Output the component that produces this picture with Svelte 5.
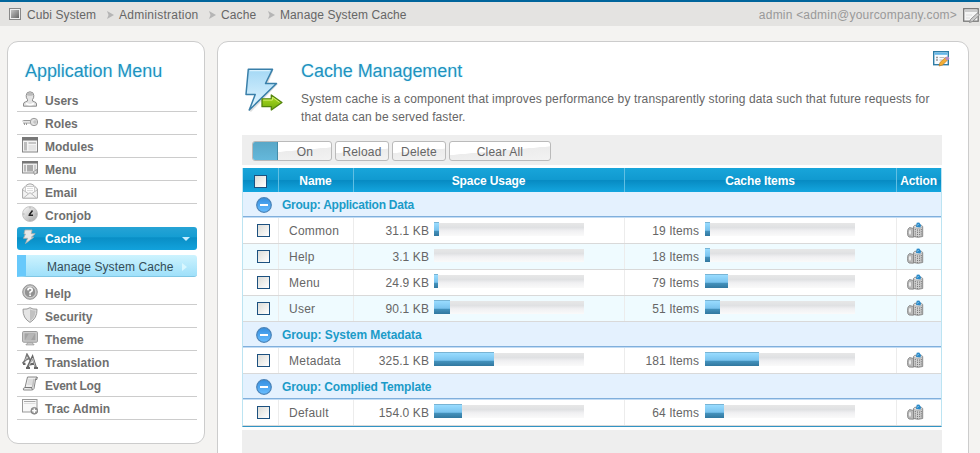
<script>
  const crumbs = ['Cubi System', 'Administration', 'Cache', 'Manage System Cache'];
  const top = ['Users', 'Roles', 'Modules', 'Menu', 'Email', 'Cronjob'];
  const bottom = ['Help', 'Security', 'Theme', 'Translation', 'Event Log', 'Trac Admin'];
  const groups = [
    {
      name: 'Application Data',
      rows: [
        { name: 'Common', size: '31.1 KB', used: 5, items: 19, bar: 5 },
        { name: 'Help', size: '3.1 KB', used: 0, items: 18, bar: 5 },
        { name: 'Menu', size: '24.9 KB', used: 4, items: 79, bar: 23 },
        { name: 'User', size: '90.1 KB', used: 16, items: 51, bar: 15 },
      ],
    },
    { name: 'System Metadata', rows: [{ name: 'Metadata', size: '325.1 KB', used: 60, items: 181, bar: 54 }] },
    { name: 'Complied Template', rows: [{ name: 'Default', size: '154.0 KB', used: 28, items: 64, bar: 19 }] },
  ];
</script>

{#snippet icon(name)}
  <svg class="ico" width="16" height="16" viewBox="0 0 16 16">
    {#if name === 'Users'}
      <path d="M1.500 15.200V13q0-1.600 2-2.200l2-.8V8.600Q4 7 4.200 4.500 4.400.8 8 .8t3.800 3.700Q12 7 10.500 8.600V10l2 .8q2 .6 2 2.200v2.200z" fill="#e3e3e3" stroke="#8b8b8b" />
      <path d="M5 4.200q3 1.200 6 0V3Q9.500 1.300 8 1.300T5 3z" fill="#bbb" /><path d="M4 12.500q4 2.500 8 0" stroke="#fff" stroke-width="1.500" fill="none" />
    {:else if name === 'Roles'}
      <path d="M.5 7L1.500 6.500H9.500M1 9h8.500M2.500 9v2M4.500 9v2" stroke="#999" fill="none" />
      <path d="M1 7.800h9" stroke="#ddd" />
      <circle cx="12" cy="8" r="3.700" fill="#e2e2e2" stroke="#9b9b9b" /><circle cx="13" cy="8" r="1.100" fill="#fff" stroke="#999" stroke-width=".7" />
    {:else if name === 'Modules'}
      <rect x=".5" y=".5" width="15" height="14.500" fill="#f4f4f4" stroke="#858585" /><rect width="16" height="3.500" fill="#777" />
      <rect x="2" y="5" width="3" height="8.500" fill="#bdbdbd" /><rect x="6.500" y="5" width="7.500" height="2" fill="#c6c6c6" /><rect x="6.500" y="8" width="7.500" height="5.500" fill="#e4e4e4" />
    {:else if name === 'Menu'}
      <rect x=".5" y="1.500" width="15" height="11.500" fill="#eee" stroke="#8b8b8b" /><rect y="1" width="16" height="2.500" fill="#777" />
      <rect x="2" y="5" width="2" height="6.500" fill="#b8b8b8" /><rect x="5" y="5" width="6" height="6.500" fill="#aaa" /><rect x="12" y="5" width="2" height="5" fill="#ccc" />
      <path d="M11.500 11.500l3.500-2v3.500l-2.500 1.500z" fill="#ddd" stroke="#888" stroke-width=".8" />
    {:else if name === 'Email'}
      <path d="M.6 6L4 2.500Q8-.8 12 2.500L15.400 6v9.200H.6z" fill="#f3f3f3" stroke="#a5a5a5" />
      <path d="M3.500 8.500V3.500h9v5" fill="#fff" stroke="#ccc" /><path d="M5 5.500h6M5 7.500h6" stroke="#ddd" /><path d="M1 7l5.500 3.800L1.500 15M15 7l-5.500 3.800 5 4.200M6.500 10.800L8 9.700l1.500 1.100" fill="none" stroke="#bbb" />
    {:else if name === 'Cronjob'}
      <circle cx="8" cy="8" r="7.500" fill="url(#metal)" stroke="#bbb" stroke-width=".8" /><path d="M10.500 4.500L7.500 8.500M6.500 9.300H11" stroke="#222" stroke-width="1.500" /><path d="M8 1v1.500M8 13.500V15M1 8h1.500M13.500 8H15" stroke="#aaa" />
    {:else if name === 'Cache'}
      <path d="M3 2h7L9.200 5.700h4L9.300 9.200h2.400L3.500 15.500 5.700 10.300H1.500L3.500 6H2z" fill="#e8e8e8" stroke="#b7b0aa" stroke-width=".8" />
    {:else if name === 'Help'}
      <circle cx="8" cy="8" r="7.300" fill="#bbb" stroke="#959595" /><circle cx="8" cy="8" r="5.700" fill="#929292" stroke="#d8d8d8" stroke-width=".8" />
      <path d="M5.900 6.400Q6 4.200 8.100 4.200T10.200 6.200Q10.200 7.300 8.100 8.300V9.400M8.100 10.500v1.600" fill="none" stroke="#fff" stroke-width="1.700" />
    {:else if name === 'Security'}
      <path d="M8 .7Q10.500 2.500 15 2.200 15.300 11.200 8 15.400.7 11.200 1 2.200 5.500 2.500 8 .7z" fill="#e5e5e5" stroke="#999" />
      <path d="M8 2.200Q10.500 3.600 13.700 3.400 13.500 10.500 8 14z" fill="#c2c2c2" />
    {:else if name === 'Theme'}
      <rect x=".6" y="1.500" width="14.800" height="10.700" rx="1" fill="#ccc" stroke="#999" /><rect x="2.500" y="3.300" width="11" height="7" fill="#a3a3a3" /><path d="M3 10l4-6.500h6L9 10z" fill="#b6b6b6" /><path d="M5.500 12.500h5v1.500h1.500v1H4v-1h1.500z" fill="#c9c9c9" stroke="#999" stroke-width=".6" />
    {:else if name === 'Translation'}
      <path d="M.5 10.500L3 7.500 5 1.500 8.500 7.500M2.500 7.500L7 5.500" fill="none" stroke="#777" stroke-width="1.800" />
      <path d="M5.500 14.500L10.500 4l3.500 11M7.500 11.500l6-1.200M1 11l2.500-.2M4 15h4M12 15h4" fill="none" stroke="#666" stroke-width="2.200" /><path d="M7 13l3.700-8 2.500 8.500M3.500 7L5 3.500" fill="none" stroke="#ccc" stroke-width=".9" />
    {:else if name === 'Event Log'}
      <path d="M5.500 1H15q-1.200 1-1.500 3L12 12.500Q11.500 14 9.500 14H1.500Q.5 12 3 11.500z" fill="#efefef" stroke="#888" /><path d="M3 11.500h7q-.5 2 .5 2.500M13.300 3.500h1.500L15.300 1" fill="#ddd" stroke="#777" /><path d="M12 3l-1.500 8" stroke="#bbb" stroke-width="1.500" /><path d="M6 4h6M5.700 6h6M5.300 8h6" stroke="#ccc" />
    {:else if name === 'Trac Admin'}
      <rect x=".5" y=".5" width="14.500" height="12.500" fill="#f8f8f8" stroke="#999" /><path d="M2 2.500h11.500" stroke="#aaa" /><path d="M2 4.500h11.500" stroke="#ddd" />
      <circle cx="12.300" cy="11.800" r="3.400" fill="#999" stroke="#777" stroke-width=".7" /><path d="M12.300 9.600V14M10.100 11.800h4.400" stroke="#fff" stroke-width="1.400" />
    {/if}
  </svg>
{/snippet}

{#snippet menuItem(name)}
  <a class="item" class:last={name === 'Cronjob'}>{@render icon(name)}<span class:wide={name === 'Event Log'}>{name}</span></a>
{/snippet}

<svg class="defs" width="0" height="0">
  <defs>
    <linearGradient id="metal" x1="0" y1="0" x2="1" y2="1"><stop offset="0" stop-color="#fafafa" /><stop offset="1" stop-color="#a5a5a5" /></linearGradient>
    <linearGradient id="dark" x1="0" y1="0" x2="1" y2="1"><stop offset="0" stop-color="#c4c4c4" /><stop offset="1" stop-color="#666" /></linearGradient>
    <linearGradient id="sky" x1="0" y1="0" x2="0" y2="1"><stop offset="0" stop-color="#a4d8f5" /><stop offset="1" stop-color="#e3f6ff" /></linearGradient>
    <linearGradient id="leaf" x1="0" y1="0" x2="0" y2="1"><stop offset="0" stop-color="#b0df22" /><stop offset="1" stop-color="#72ac0c" /></linearGradient>
    <linearGradient id="orb" x1="0" y1="0" x2="0" y2="1"><stop offset="0" stop-color="#348ee0" /><stop offset="1" stop-color="#68bdff" /></linearGradient>
  </defs>
</svg>

<div class="page">
  <header>
    <svg class="home" width="12" height="12" viewBox="0 0 12 12"><rect x=".5" y=".5" width="11" height="11" fill="#eee" stroke="#888" /><rect x="2" y="2" width="8" height="8" fill="url(#dark)" /></svg>
    <nav>
      {#each crumbs as c, i}
        {#if i}<svg class="sep" width="7" height="8" viewBox="0 0 7 8"><path d="M0 0L7 4 0 8 1.500 4z" fill="#b5b5b5" /></svg>{/if}
        <span class="c{i}">{c}</span>
      {/each}
    </nav>
    <span class="user">admin &lt;admin@yourcompany.com&gt;</span>
    <svg class="note" width="17" height="17" viewBox="0 0 17 17"><rect x=".7" y="1.700" width="14.500" height="12.500" fill="#f5f5f5" stroke="#777" stroke-width="1.300" /><path d="M2 4h12" stroke="#ccc" stroke-width="2" /><path d="M3 8h6M3 11h4" stroke="#ddd" /><path d="M6.500 15.500l1-3 7-6.500 2 2-7 6.500z" fill="#ccc" stroke="#888" stroke-width=".9" /></svg>
  </header>

  <div class="body">
    <aside>
      <h2>Application Menu</h2>
      {#each top as n}{@render menuItem(n)}{/each}
      <a class="active">{@render icon('Cache')}<span>Cache</span><i></i></a>
      <a class="sub"><span>Manage System Cache</span><i></i></a>
      {#each bottom as n}{@render menuItem(n)}{/each}
    </aside>

    <main>
      <div class="intro">
        <svg class="bolt" width="40" height="48" viewBox="0 0 40 48">
          <path d="M5 5h24l-5 13h10L7 46 4 44l8-15H3z" fill="#000" opacity=".12" />
          <path d="M4.300 3.300H28.500L21.500 17.500H32.500L5.300 44 11.200 28.500H2z" fill="url(#sky)" stroke="#397fa9" stroke-width="1.500" stroke-linejoin="round" />
          <path d="M5.800 4.700h20" stroke="#e6f7ff" />
          <path d="M18 32.800H27.300V29L38 36.500 27.300 44V40.700H18z" fill="url(#leaf)" stroke="#53840d" stroke-width="1.300" stroke-linejoin="round" /><path d="M19.200 34.100H28.400V31.200L35.500 36.300" fill="none" stroke="#d5ee71" />
        </svg>
        <div class="copy">
          <h1>Cache Management</h1>
          <p><span class="l1">System cache is a component that improves performance by transparently storing data such that future requests for</span><br /><span class="l2">that data can be served faster.</span></p>
        </div>
        <svg class="edit" width="17" height="16" viewBox="0 0 17 16"><rect x=".7" y=".7" width="14.600" height="13" fill="#f7fbff" stroke="#2e7ca5" stroke-width="1.400" /><rect x="1.500" y="1.500" width="13" height="2.300" fill="#63b5e6" /><path d="M3 6.500h2M3 9h2" stroke="#999" stroke-width="1.500" /><path d="M6.500 6.500h5M6.500 9h3" stroke="#bbb" /><path d="M6 15l1-3.500 5.500-5 2.300 2.300L9.500 14z" fill="#f2ae35" stroke="#bb7920" stroke-width=".7" /><circle cx="14.300" cy="7.300" r="1.900" fill="#b98cc4" /></svg>
      </div>

      <div class="tools">
        <button class="on"><b></b><span>On</span></button>
        <button class="mid">Reload</button>
        <button class="mid">Delete</button>
        <button class="clear">Clear All</button>
      </div>

      <div class="table">
        <div class="tr head">
          <div class="c-check"><span class="box"></span></div>
          <div class="c-name">Name</div>
          <div class="c-space">Space Usage</div>
          <div class="c-items">Cache Items</div>
          <div class="c-act">Action</div>
        </div>
        {#each groups as g, gi}
          <div class="group">
            <svg width="16" height="16" viewBox="0 0 16 16"><circle cx="8" cy="8" r="7.300" fill="url(#orb)" stroke="#4a83b8" stroke-width="1.200" /><path d="M4 8h8" stroke="#fff" stroke-width="2" /></svg>
            <span class="g{gi}">Group: {g.name}</span>
          </div>
          {#each g.rows as r, i}
            <div class="tr row" class:alt={i % 2}>
              <div class="c-check"><span class="box"></span></div>
              <div class="c-name">{r.name}</div>
              <div class="c-space"><span class="val">{r.size}</span><span class="track"><span class="fill" style="width:{r.used}px"></span></span></div>
              <div class="c-items"><span class="val">{r.items} Items</span><span class="track"><span class="fill" style="width:{r.bar}px"></span></span></div>
              <div class="c-act">
                <svg width="17" height="17" viewBox="0 0 17 17">
                  <path d="M6.500 4.500Q6.500 3 11 3t4.700 1.500V14.500q-4.700 1.500-9.200 0z" fill="#d0d0d0" stroke="#8a8a8a" />
                  <path d="M8.300 7v7.500M10.500 7.500v7.500M12.600 7.500v7M14.300 7v7" stroke="#777" stroke-width="1" stroke-dasharray="1.200 1" />
                  <ellipse cx="11" cy="4.800" rx="4.300" ry="1.500" fill="#e6e6e6" stroke="#888" stroke-width=".5" />
                  <path d="M9 5l.7-4.300 2.500-.2L14 3l-.5 2.500z" fill="#2c8ac8" /><path d="M10.500 3.500l1-1.500" stroke="#8fd0f5" />
                  <path d="M2.500 5.500L6.500 6.500v8.700L2 15Q.5 14.500.5 10.500T2.500 5.500z" fill="#b9b9b9" stroke="#858585" stroke-width=".9" /><ellipse cx="3" cy="10.300" rx="1.500" ry="3" fill="#eee" stroke="#999" stroke-width=".6" />
                </svg>
              </div>
            </div>
          {/each}
        {/each}
      </div>
      <div class="foot"></div>
    </main>
  </div>
</div>

<style>
  :global(body) { margin: 0; overflow: hidden; }
  .page { width: 980px; height: 453px; overflow: hidden; background: #f4f3f1; font: 12px/16px "Liberation Sans", Arial, sans-serif; color: #666; letter-spacing: .1px; }
  .page * { box-sizing: border-box; }
  .defs { display: block; }
  svg { flex: none; }
  header { height: 26px; border-top: 2px solid #00659c; background: #e4e3e1; display: flex; align-items: center; padding: 0 0 0 9px; }
  .home { margin-right: 6px; }
  nav { display: flex; align-items: center; white-space: nowrap; padding-top: 2px; }
  .sep { margin: 0 5px 0 10px; }
  .c0 { width: 70px; letter-spacing: .1px; }
  .c1 { width: 80px; letter-spacing: .25px; }
  .c2 { width: 37px; }
  .user { margin-left: auto; margin-right: 6px; padding-top: 2px; color: #999; white-space: nowrap; letter-spacing: .21px; }
  .note { margin-top: 2px; }
  .body { display: flex; align-items: flex-start; gap: 12px; padding: 15px 0 0 7px; }
  aside { width: 198px; height: 403px; border: 1px solid #ccc; border-radius: 11px; background: #fff; padding: 17px 7px 0 9px; }
  h1, h2 { margin: 0; font-weight: 400; font-size: 18px; line-height: 24px; color: #1e93bf; letter-spacing: -.06px; white-space: nowrap; text-shadow: 0 0 2px #c5eefa; }
  h2 { padding-left: 8px; margin-bottom: 6px; }
  .item, .active { display: flex; height: 23px; padding: 0 7px 0 5px; border-bottom: 1px solid #ccc; font-weight: 700; color: #6f6f6f; letter-spacing: .02px; }
  .item .ico { margin-top: 2px; }
  .item span, .active span { margin: 4px 0 0 7px; }
  .item .wide { letter-spacing: -.25px; }
  .active { align-items: flex-start; color: #fff; border: 0; border-radius: 3px; background: linear-gradient(#26a3d5, #149dd2 45%, #098ec5 46%, #12a2dc); margin-bottom: 5px; }
  .active .ico { margin-top: 1px; }
  .active i { margin: 10px 0 0 auto; border: 4px solid transparent; border-top: 4px solid #c6edff; border-bottom: 0; }
  .item.last { border-bottom-color: #fff; }
  .sub { display: flex; align-items: center; height: 22px; margin-bottom: 5px; border-left: 9px solid #68c9fb; border-bottom: 1px solid #80c7e4; border-radius: 0 3px 3px 0; background: linear-gradient(#cdf3fe, #9fe0fa); color: #344d57; padding: 2px 10px 0 21px; white-space: nowrap; }
  .sub i { margin: 0 0 0 auto; border: 4px solid transparent; border-left: 5px solid #d9f7ff; border-right: 0; }
  main { width: 752px; height: 440px; border: 1px solid #ccc; border-radius: 11px 11px 0 0; background: #fff; padding: 0 26px 0 24px; }
  .intro { display: flex; height: 93px; }
  .bolt { margin: 24px 0 0 2px; }
  .copy { margin: 17px 0 0 17px; width: 629px; white-space: nowrap; }
  p { margin: 7px 0 0; line-height: 18px; }
  .l1 { letter-spacing: .132px; }
  .edit { margin: 9px 0 0 3px; }
  .tools { display: flex; align-items: center; width: 700px; height: 30px; background: #eee; padding: 2px 0 0 10px; }
  button { height: 20px; padding: 1px 0 0; border: 1px solid #bababa; border-radius: 3px; background: linear-gradient(175deg, #fff 48%, #ececec 50%, #f2f2f2); font: inherit; letter-spacing: .2px; color: #666; display: flex; align-items: center; justify-content: center; }
  .on { width: 80px; margin-right: 3px; overflow: hidden; padding: 0; }
  .on b { width: 25px; height: 20px; background: linear-gradient(#58a6c6, #65b9dc); border-right: 1px solid #458da9; }
  .on span { flex: 1; padding: 1px 0 0 1px; }
  .mid { width: 54px; margin-right: 3px; }
  .clear { width: 102px; }
  .table { width: 700px; margin-top: 3px; border: solid #bce4f2; border-width: 0 1px; border-bottom: 1px solid #3294c4; }
  .tr { display: grid; grid-template-columns: 36px 75px 271px 272px 44px; }
  .tr > div { display: flex; align-items: center; border-right: 1px solid #ececec; }
  .tr > div:last-child { border: 0; }
  .head { height: 24px; background: linear-gradient(#18a5da, #119ad0 48%, #078bc3 52%, #14a6df); color: #fff; font-weight: 700; letter-spacing: -.1px; }
  .tr.head > div { justify-content: center; border-color: #61bfe3; padding: 2px 1px 0 0; }
  .row { height: 26px; border-bottom: 1px solid #d9d9d9; }
  .alt { background: #effbff; }
  .box { width: 13px; height: 13px; border: 1px solid #1c5180; background: linear-gradient(135deg, #dcdcd7, #fff); }
  .row .box { margin-left: 14px; }
  .row .c-name { padding-left: 10px; letter-spacing: .25px; }
  .val { width: 75px; text-align: right; letter-spacing: .1px; }
  .c-items .val { padding-right: 1px; }
  .track { margin: -2px 0 0 5px; width: 150px; height: 13px; background: linear-gradient(#e7e7e7, #e0e1e3 35%, #f0f0f2 60%, #fafafa); }
  .fill { display: block; height: 14px; margin-top: -1px; background: linear-gradient(#78b4d4 0 1px, #99dcff 1px, #79c3ee 60%, #4594bf 63%, #31779f); }
  .c-act { padding-left: 10px; }
  .group { height: 26px; display: flex; align-items: center; background: #e4f1fe; border-bottom: 1px solid #c3dcf4; box-shadow: inset 0 -1px #80afdc; padding-left: 13px; color: #1b9bc8; font-weight: 700; letter-spacing: -.25px; }
  .group span { margin-left: 10px; }
  .group .g1 { letter-spacing: -.08px; }
  .group .g2 { letter-spacing: -.16px; }
  .foot { width: 700px; height: 30px; margin-top: 3px; background: #eee; }
</style>
